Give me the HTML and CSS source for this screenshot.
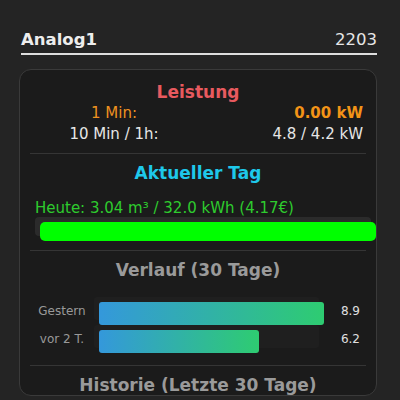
FILE: index.html
```html
<!DOCTYPE html>
<html lang="de">
<head>
<meta charset="utf-8">
<link rel="stylesheet" href="styles.css">
</head>
<body>
<div class="page">
  <div class="header">
    <span class="title">Analog1</span>
    <span class="count">2203</span>
  </div>
  <div class="card">
    <section class="sec sec-first">
      <h2 class="head red">Leistung</h2>
      <div class="kv">
        <span class="k orange">1 Min:</span><span class="v orange bold">0.00 kW</span>
        <span class="k">10 Min / 1h:</span><span class="v">4.8 / 4.2 kW</span>
      </div>
    </section>
    <section class="sec sec-day">
      <h2 class="head cyan">Aktueller Tag</h2>
      <div class="today">
        <div class="today-text">Heute: 3.04 m³ / 32.0 kWh (4.17€)</div>
        <div class="ptrack"><div class="pfill"></div></div>
      </div>
    </section>
    <section class="sec sec-hist">
      <h2 class="head gray">Verlauf (30 Tage)</h2>
      <div class="bars">
        <div class="brow">
          <span class="blabel">Gestern</span>
          <div class="btrack"><div class="bfill" style="width:100%"></div></div>
          <span class="bval">8.9</span>
        </div>
        <div class="brow">
          <span class="blabel">vor 2 T.</span>
          <div class="btrack"><div class="bfill" style="width:71%"></div></div>
          <span class="bval">6.2</span>
        </div>
      </div>
    </section>
    <section class="sec">
      <h2 class="head gray">Historie (Letzte 30 Tage)</h2>
    </section>
  </div>
</div>
</body>
</html>
```
FILE: styles.css
```css
html, body {
  margin: 0;
  padding: 0;
  background: #242424;
  font-family: "DejaVu Sans", Verdana, sans-serif;
  color: #e6e6e6;
  overflow: hidden;
  height: 400px;
}
.page {
  padding: 30px 23px 0 19px;
}
.header {
  display: flex;
  justify-content: space-between;
  align-items: baseline;
  margin: 0 0 0 2px;
  padding-bottom: 4px;
  border-bottom: 2px solid #dedede;
  font-size: 16.5px;
  line-height: 19px;
}
.title {
  font-weight: bold;
  color: #ededed;
}
.count {
  color: #e6e6e6;
}
.card {
  margin-top: 14px;
  width: 358px;
  box-sizing: border-box;
  background: #1b1b1b;
  border: 1px solid #3a3a3a;
  border-radius: 12px;
  padding: 0 10px;
}
.sec {
  padding-top: 9px;
  border-bottom: 1px solid #353535;
}
.sec:last-child {
  border-bottom: none;
}
.sec-first {
  padding-top: 12px;
  padding-bottom: 8px;
}
.head {
  margin: 0;
  font-size: 17px;
  line-height: 20px;
  font-weight: bold;
  text-align: center;
}
.red { color: #e85a5f; }
.cyan { color: #1ec8ea; }
.gray { color: #9a9a9a; }
.orange { color: #ee9120; }
.bold { font-weight: bold; color: #f39417; }
.kv {
  display: grid;
  grid-template-columns: 1fr 1fr;
  font-size: 15px;
  line-height: 21px;
  margin-top: 1px;
}
.k { text-align: center; }
.v { text-align: right; padding-right: 3px; }
.sec-day {
  padding-bottom: 14px;
}
.sec-day .head {
  margin-bottom: 16px;
}
.today {
  margin-left: 5px;
  margin-right: -5px;
}
.today-text {
  font-size: 15px;
  line-height: 18px;
  color: #2ecb2e;
}
.ptrack {
  height: 19px;
  box-sizing: border-box;
  padding-top: 5px;
  background: #2b2b2b;
  border-radius: 4px;
}
.pfill {
  margin-left: 5px;
  width: 100%;
  height: 19px;
  background: #00ff00;
  border-radius: 5px;
}
.sec-hist {
  padding-bottom: 17px;
}
.sec-hist .head {
  margin-bottom: 17px;
}
.bars {
  display: flex;
  flex-direction: column;
  gap: 5px;
}
.brow {
  display: flex;
  align-items: center;
  height: 23px;
}
.blabel {
  width: 64px;
  padding-top: 5px;
  text-align: center;
  font-size: 12px;
  color: #999;
}
.btrack {
  width: 225px;
  height: 23px;
  box-sizing: border-box;
  padding-top: 5px;
  background: #1f1f1f;
  border-radius: 3px;
}
.bfill {
  margin-left: 5px;
  height: 23px;
  border-radius: 3px;
  background: linear-gradient(to right, #3498db, #2ecc71);
}
.bval {
  flex: 1;
  padding-top: 5px;
  text-align: right;
  padding-right: 6px;
  font-size: 12px;
  color: #e0e0e0;
}
```
